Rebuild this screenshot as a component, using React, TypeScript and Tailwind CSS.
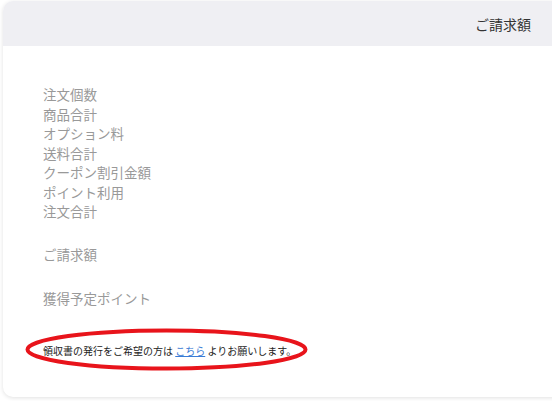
const rows = [
  "注文個数",
  "商品合計",
  "オプション料",
  "送料合計",
  "クーポン割引金額",
  "ポイント利用",
  "注文合計",
];

export default function App() {
  return (
    <div
      className="w-[552px] h-[401px] overflow-hidden bg-white pl-[3px] pt-[1px]"
      style={{ fontFamily: '"Noto Sans CJK JP", "Noto Sans", sans-serif' }}
    >
      <div className="relative w-[600px] h-[396px] rounded-[10px] bg-white shadow-[0_1px_4px_rgba(0,0,0,0.12)] overflow-hidden">
        {/* header */}
        <div className="h-[45px] bg-[#efeff3] flex items-center justify-end w-[549px] pr-[21px]">
          <span className="text-[14px] leading-[20px] text-[#333]">ご請求額</span>
        </div>

        {/* body */}
        <div className="pl-[40px] pt-[39px] text-[13.5px] text-[#999]">
          <ul className="leading-[19.5px]">
            {rows.map((r) => (
              <li key={r}>{r}</li>
            ))}
          </ul>
          <p className="mt-[23.5px] leading-[19.5px]">ご請求額</p>
          <p className="mt-[24.5px] leading-[19.5px]">獲得予定ポイント</p>
          <p className="mt-[35px] text-[10px] leading-[14px] text-[#222]">
            領収書の発行をご希望の方は{" "}
            <a href="#" className="text-[#3a7bd5] underline">
              こちら
            </a>{" "}
            よりお願いします。
          </p>
        </div>

        {/* red marker */}
        <svg
          className="absolute left-0 top-0 pointer-events-none"
          width="552"
          height="400"
        >
          <ellipse
            cx="163.5"
            cy="348.5"
            rx="139"
            ry="19"
            fill="none"
            stroke="#e8141b"
            strokeWidth="4"
          />
        </svg>
      </div>
    </div>
  );
}
